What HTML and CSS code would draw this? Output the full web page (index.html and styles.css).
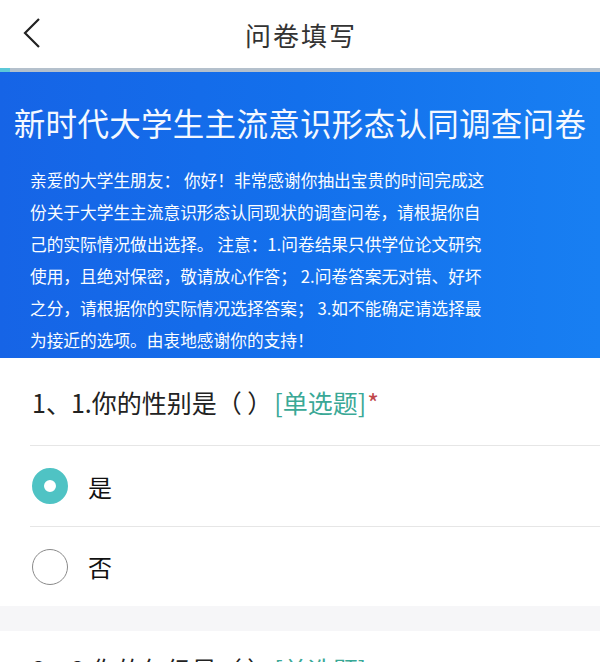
FILE: index.html
```html
<!DOCTYPE html>
<html lang="zh">
<head>
<meta charset="utf-8">
<link rel="stylesheet" href="styles.css">
</head>
<body>
<div class="page">
  <header class="topbar">
    <svg class="back" width="20" height="32" viewBox="0 0 20 32"><path d="M17 2 L3 16 L17 30" fill="none" stroke="#222" stroke-width="2.2"/></svg>
    <div class="topbar-title">问卷填写</div>
  </header>
  <div class="progress"><div class="progress-fill"></div></div>
  <section class="banner">
    <h1 class="banner-title">新时代大学生主流意识形态认同调查问卷</h1>
    <p class="banner-text">亲爱的大学生朋友： 你好！非常感谢你抽出宝贵的时间完成这<br>份关于大学生主流意识形态认同现状的调查问卷，请根据你自<br>己的实际情况做出选择。 注意：1.问卷结果只供学位论文研究<br>使用，且绝对保密，敬请放心作答； 2.问卷答案无对错、好坏<br>之分，请根据你的实际情况选择答案； 3.如不能确定请选择最<br>为接近的选项。由衷地感谢你的支持！</p>
  </section>
  <section class="question">
    <div class="q-title">1、1.你的性别是<span class="paren">（ ）</span><span class="q-type">[单选题]</span><span class="q-req">*</span></div>
    <div class="option"><span class="radio checked"></span><span class="opt-label">是</span></div>
    <div class="option"><span class="radio"></span><span class="opt-label">否</span></div>
  </section>
  <div class="gap"></div>
  <section class="question question-next">
    <div class="q-title">2、2.你的年级是<span class="paren">（ ）</span><span class="q-type">[单选题]</span></div>
  </section>
</div>
</body>
</html>
```
FILE: styles.css
```css
* { box-sizing: border-box; margin: 0; padding: 0; }
html, body { background: #fff; }
body { font-family: "Noto Sans CJK SC", "Noto Sans", sans-serif; width: 600px; height: 662px; overflow: hidden; }
.page { width: 600px; }
.topbar { height: 68px; position: relative; display: flex; align-items: center; justify-content: center; background: #fff; }
.back { position: absolute; left: 22px; top: 17px; }
.topbar-title { font-size: 26px; color: #333; letter-spacing: 2px; padding-left: 2px; }
.progress { height: 4px; background: #b4c0cc; }
.progress-fill { width: 10px; height: 4px; background: #5cc8d8; }
.banner { background: linear-gradient(90deg, #1664e6 0%, #1370ec 50%, #187ff2 100%); height: 286px; padding: 26px 0 0 0; color: #fff; }
.banner-title { font-size: 31.5px; font-weight: 400; text-align: center; line-height: 48px; letter-spacing: 0.3px; color: #f4f8ff; }
.banner-text { font-size: 16.7px; line-height: 32px; padding-left: 30px; margin-top: 18px; color: #fbfdff; }
.question { padding-left: 30px; }
.q-title { font-size: 25px; color: #222; height: 88px; line-height: 88px; border-bottom: 1px solid #e6e6e6; padding-left: 2px; }
.paren { margin-right: 2px; }
.q-type { color: #3aa896; }
.q-req { color: #c0464a; margin-left: 1px; }
.option { display: flex; align-items: center; height: 80px; }
.option + .option { border-top: 1px solid #e6e6e6; }
.radio { width: 36px; height: 36px; border-radius: 50%; border: 1.5px solid #8a8a8a; margin-left: 2px; flex: none; }
.radio.checked { border: 12px solid #4fc3c4; background: #fff; }
.opt-label { font-size: 24px; color: #111; margin-left: 20px; }
.gap { height: 25px; background: #f6f6f8; }
.question-next .q-title { line-height: 76px; height: 76px; }
```
